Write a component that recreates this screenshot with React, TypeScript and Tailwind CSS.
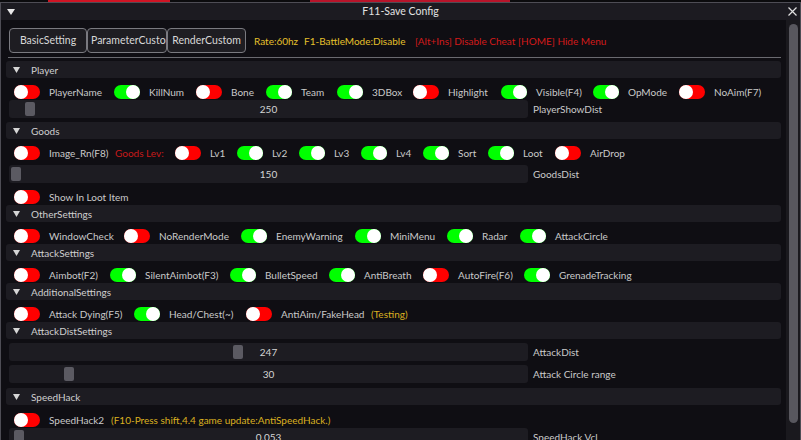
import React from "react";

type It = { on: boolean; label: string; w: string; mr?: string };

function Toggle({ on }: { on: boolean }) {
  return (
    <div
      className={
        on
          ? "flex h-[14px] w-[26px] shrink-0 items-center justify-end rounded-full bg-[#00ff00]"
          : "flex h-[14px] w-[26px] shrink-0 items-center justify-start rounded-full bg-[#ff0000]"
      }
    >
      <div className="h-[14px] w-[14px] rounded-full bg-white" />
    </div>
  );
}

function Item({ on, label, w, mr }: It) {
  return (
    <div className="flex shrink-0 items-center">
      <Toggle on={on} />
      <span className={"ml-[9px] whitespace-nowrap " + w + " " + (mr ?? "mr-[13px]")}>{label}</span>
    </div>
  );
}

function Row({ items, children, cls }: { items: It[]; children?: React.ReactNode; cls?: string }) {
  return (
    <div className={"flex shrink-0 items-center pl-[8px] " + (cls ?? "mt-[4px] h-[18px] pt-[2px]")}>
      {items.map((it, i) => (
        <Item key={i} {...it} />
      ))}
      {children}
    </div>
  );
}

function Header({ title, cls }: { title: string; cls?: string }) {
  return (
    <div className={"flex h-[17px] shrink-0 items-center rounded-[3px] bg-[#1d1c22] " + (cls ?? "")}>
      <svg width="7" height="6" viewBox="0 0 7 6" className="ml-[7px] shrink-0">
        <path d="M0 0 L7 0 L3.5 6 Z" fill="#d6d6d6" />
      </svg>
      <span className="ml-[11px] text-[#cfcfcf]">{title}</span>
    </div>
  );
}

function Slider({ value, grab, label, cls }: { value: string; grab: number; label: string; cls?: string }) {
  return (
    <div className={"flex h-[18px] shrink-0 items-center " + (cls ?? "")}>
      <div className="relative ml-[3px] flex h-[18px] w-[519px] items-center justify-center rounded-[3px] bg-[#1d1c22]">
        <div className="absolute top-[2px] h-[14px] w-[10px] rounded-[2px] bg-[#5b5a62]" style={{ left: grab }} />
        <span className="relative text-[#d4d4d4]">{value}</span>
      </div>
      <span className="ml-[5px] whitespace-nowrap">{label}</span>
    </div>
  );
}

const player: It[] = [
  { on: false, label: "PlayerName", w: "w-[52px]" },
  { on: true, label: "KillNum", w: "w-[34px]" },
  { on: false, label: "Bone", w: "w-[22px]" },
  { on: true, label: "Team", w: "w-[23px]" },
  { on: true, label: "3DBox", w: "w-[28px]" },
  { on: false, label: "Highlight", w: "w-[40px]" },
  { on: true, label: "Visible(F4)", w: "w-[44px]" },
  { on: true, label: "OpMode", w: "w-[38px]" },
  { on: false, label: "NoAim(F7)", w: "w-[46px]" },
];

const goods: It[] = [
  { on: false, label: "Lv1", w: "w-[14px]" },
  { on: true, label: "Lv2", w: "w-[14px]" },
  { on: true, label: "Lv3", w: "w-[14px]" },
  { on: true, label: "Lv4", w: "w-[14px]" },
  { on: true, label: "Sort", w: "w-[17px]" },
  { on: true, label: "Loot", w: "w-[19px]" },
  { on: false, label: "AirDrop", w: "w-[34px]" },
];

const other: It[] = [
  { on: false, label: "WindowCheck", w: "w-[62px]" },
  { on: false, label: "NoRenderMode", w: "w-[69px]" },
  { on: true, label: "EnemyWarning", w: "w-[66px]" },
  { on: true, label: "MiniMenu", w: "w-[44px]" },
  { on: true, label: "Radar", w: "w-[25px]" },
  { on: true, label: "AttackCircle", w: "w-[52px]" },
];

const attack: It[] = [
  { on: false, label: "Aimbot(F2)", w: "w-[48px]" },
  { on: true, label: "SilentAimbot(F3)", w: "w-[72px]" },
  { on: true, label: "BulletSpeed", w: "w-[51px]" },
  { on: true, label: "AntiBreath", w: "w-[46px]" },
  { on: false, label: "AutoFire(F6)", w: "w-[53px]" },
  { on: true, label: "GrenadeTracking", w: "w-[74px]" },
];

const additional: It[] = [
  { on: false, label: "Attack Dying(F5)", w: "w-[72px]" },
  { on: true, label: "Head/Chest(~)", w: "w-[64px]" },
  { on: false, label: "AntiAim/FakeHead", w: "w-[90px]", mr: "mr-0" },
];

export default function App() {
  return (
    <div className="flex h-[440px] w-[801px] flex-col overflow-hidden bg-[#0b0b0d] font-['Lato',sans-serif] text-[10px] leading-none text-[#cacaca]">
      <div className="flex h-[2px] shrink-0">
        <div className="w-[48px]" />
        <div className="w-[122px] bg-[#d01424]" />
        <div className="w-[140px]" />
        <div className="w-[200px] bg-[#b8142a]" />
      </div>
      <div className="flex min-h-0 flex-1 flex-col border border-b-0 border-[#4e4d55]">
        <div className="grid h-[17px] shrink-0 grid-cols-[1fr_auto_1fr] items-center bg-[#1c1b21]">
          <svg width="8" height="6" viewBox="0 0 8 6" className="ml-[6px]">
            <path d="M0 0 L8 0 L4 6 Z" fill="#e8e8e8" />
          </svg>
          <span className="text-[10.5px] text-[#e2e2e2]">F11-Save Config</span>
          <div className="flex justify-end pr-[3px]">
            <svg width="9" height="9" viewBox="0 0 9 9">
              <path d="M0.5 0.5 L8.5 8.5 M8.5 0.5 L0.5 8.5" stroke="#e0e0e0" strokeWidth="1.2" />
            </svg>
          </div>
        </div>
        <div className="flex min-h-0 flex-1 bg-[#0f0e13]">
          <div className="flex min-w-0 flex-1 flex-col pl-[5px] pr-[5px] pt-[8px]">
            <div className="flex h-[25px] shrink-0 items-center">
              <div className="ml-[3px] flex h-[25px] w-[78px] shrink-0 items-center justify-center rounded-[4px] border border-[#7a7a80] bg-[#1e1d22] text-[10.5px] text-[#d8d8d8]">
                BasicSetting
              </div>
              <div className="flex h-[25px] w-[80px] shrink-0 items-center justify-start overflow-hidden whitespace-nowrap rounded-[4px] border border-[#7a7a80] bg-[#1e1d22] pl-[3px] text-[10.5px] text-[#d8d8d8]">
                ParameterCustom
              </div>
              <div className="flex h-[25px] w-[79px] shrink-0 items-center justify-center rounded-[4px] border border-[#7a7a80] bg-[#1e1d22] text-[10.5px] text-[#d8d8d8]">
                RenderCustom
              </div>
              <span className="ml-[8px] w-[42px] shrink-0 whitespace-nowrap text-[#e5c02b]">Rate:60hz</span>
              <span className="ml-[8px] w-[98px] shrink-0 whitespace-nowrap text-[#e5c02b]">F1-BattleMode:Disable</span>
              <span className="ml-[13px] w-[95px] shrink-0 whitespace-nowrap text-[#d41a1a]">[Alt+Ins] Disable Cheat</span>
              <span className="ml-[8px] shrink-0 whitespace-nowrap text-[#d41a1a]">[HOME] Hide Menu</span>
            </div>
            <div className="ml-[2px] mt-[4px] h-[1px] shrink-0 bg-[#6a6a70]" />

            <Header title="Player" cls="mt-[3px]" />
            <Row items={player} />
            <Slider value="250" grab={16} label="PlayerShowDist" />

            <Header title="Goods" cls="mt-[4px]" />
            <div className="mt-[3px] flex h-[22px] shrink-0 items-center pl-[8px]">
              <Item on={false} label="Image_Rn(F8)" w="w-[66px]" mr="mr-0" />
              <span className="mr-[13px] w-[47px] shrink-0 whitespace-nowrap text-[#c81a1a]">Goods Lev:</span>
              {goods.map((it, i) => (
                <Item key={i} {...it} />
              ))}
            </div>
            <Slider value="150" grab={2} label="GoodsDist" cls="mt-[1px]" />
            <Row items={[{ on: false, label: "Show In Loot Item", w: "w-[80px]" }]} />

            <Header title="OtherSettings" />
            <Row items={other} />

            <Header title="AttackSettings" />
            <Row items={attack} />

            <Header title="AdditionalSettings" />
            <Row items={additional}>
              <span className="whitespace-nowrap text-[#dbb020]">(Testing)</span>
            </Row>

            <Header title="AttackDistSettings" />
            <Slider value="247" grab={224} label="AttackDist" cls="mt-[4px]" />
            <Slider value="30" grab={55} label="Attack Circle range" cls="mt-[4px]" />

            <Header title="SpeedHack" cls="mt-[5px]" />
            <Row items={[{ on: false, label: "SpeedHack2", w: "w-[62px]", mr: "mr-0" }]} cls="mt-[5px] h-[18px] pt-[2px]">
              <span className="whitespace-nowrap text-[#dbb020]">(F10-Press shift,4.4 game update:AntiSpeedHack.)</span>
            </Row>
            <Slider value="0.053" grab={5} label="SpeedHack Vcl" />
          </div>
          <div className="flex w-[14px] shrink-0 justify-center bg-[#1a191e] pt-[4px]">
            <div className="h-[399px] w-[9px] rounded-full bg-[#58575e]" />
          </div>
        </div>
      </div>
    </div>
  );
}
